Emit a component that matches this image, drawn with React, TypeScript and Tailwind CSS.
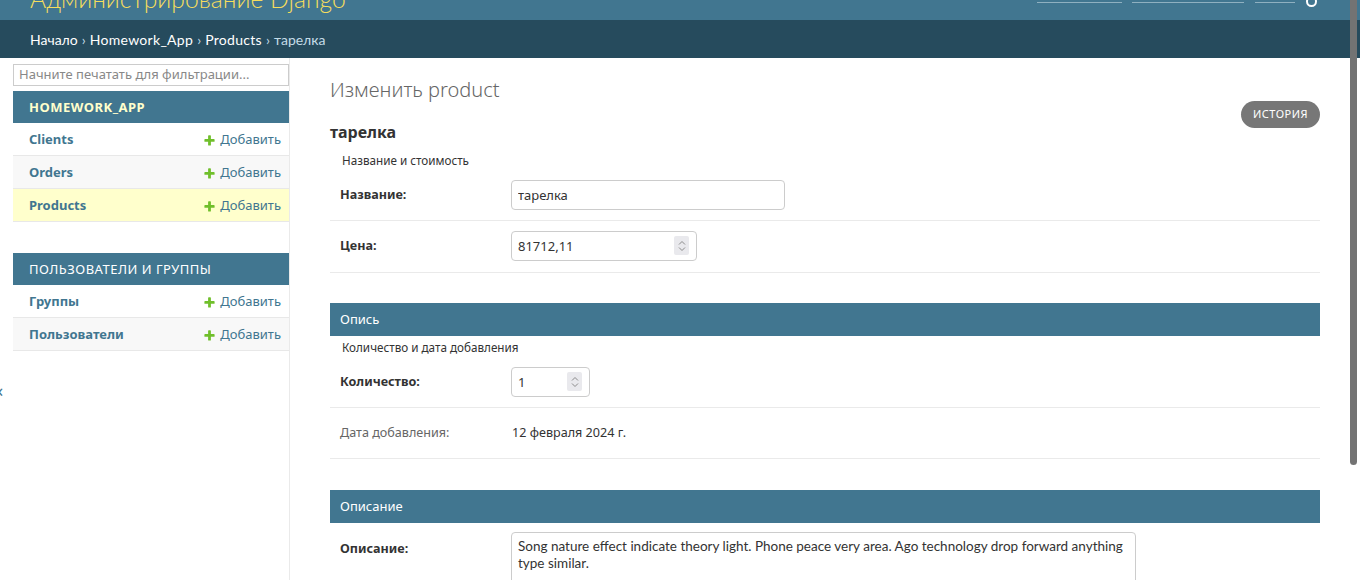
import React from "react";

const body = { fontFamily: '"Noto Sans", "Open Sans", sans-serif' };
const narrow = { fontFamily: 'Lato, "Noto Sans", sans-serif' };

function Plus() {
  return (
    <svg width="13" height="13" viewBox="0 0 1792 1792" className="shrink-0">
      <path
        fill="#70bf2b"
        d="M1600 796v192q0 40-28 68t-68 28h-416v416q0 40-28 68t-68 28h-192q-40 0-68-28t-28-68v-416h-416q-40 0-68-28t-28-68v-192q0-40 28-68t68-28h416v-416q0-40 28-68t68-28h192q40 0 68 28t28 68v416h416q40 0 68 28t28 68z"
      />
    </svg>
  );
}

function Spinner() {
  return (
    <span className="absolute right-[8px] top-[5px] flex h-[19px] w-[15px] flex-col items-center justify-center gap-[2px] rounded-[2px] bg-[#e9e9ed]">
      <svg width="8" height="5" viewBox="0 0 8 5">
        <path d="M1 4.5 L4 1.5 L7 4.5" fill="none" stroke="#8a8a8a" strokeWidth="1" />
      </svg>
      <svg width="8" height="5" viewBox="0 0 8 5">
        <path d="M1 0.5 L4 3.5 L7 0.5" fill="none" stroke="#8a8a8a" strokeWidth="1" />
      </svg>
    </span>
  );
}

function SideRow({ name, bg }: { name: string; bg: string }) {
  return (
    <div className={`flex h-[33px] items-center justify-between border-b border-[#e8e8e8] pl-[16px] pr-[8px] pt-[2px] ${bg}`}>
      <span className="text-[13px] font-bold text-[#417690]">{name}</span>
      <span className="flex items-center gap-[4px] text-[13px] text-[#417690]">
        <Plus />
        Добавить
      </span>
    </div>
  );
}

function Caption({ text, current }: { text: string; current?: boolean }) {
  return (
    <div className="flex h-[32px] items-center bg-[#417690] pl-[16px] pt-[1px]">
      <span
        className={`text-[13px] uppercase tracking-[0.5px] ${current ? "font-bold text-[#ffffcc]" : "font-normal text-white"}`}
      >
        {text}
      </span>
    </div>
  );
}

function Label({ children, bold = true }: { children: React.ReactNode; bold?: boolean }) {
  return (
    <div className={`w-[171px] shrink-0 text-[12.6px] ${bold ? "font-bold text-[#333]" : "text-[#666]"}`}>
      {children}
    </div>
  );
}

function FieldHeader({ text }: { text: string }) {
  return (
    <div className="flex h-[33px] items-center bg-[#417690] px-[10px] text-[13px] text-white">{text}</div>
  );
}

function Desc({ text }: { text: string }) {
  return (
    <div className="flex h-[21px] items-center pl-[12px] pt-[2px] text-[11.7px] text-[#333]">{text}</div>
  );
}

export default function App() {
  return (
    <div className="relative h-[580px] w-[1360px] overflow-hidden bg-white" style={body}>
      {/* header (scrolled) */}
      <div className="h-[20px] overflow-hidden bg-[#417690]">
        <div className="mt-[-26px] flex h-[40px] items-end justify-between pl-[30px] pr-[43px]">
          <div className="text-[24.7px] font-light leading-[30px] text-[#f5dd5d]" style={narrow}>
            Администрирование Django
          </div>
          <div className="mb-[11px] flex items-end text-[11px] text-[#ffc]">
            <span className="w-[85px] border-b border-[#8fb0c0]">&nbsp;</span>
            <span className="ml-[10px] w-[112px] border-b border-[#8fb0c0]">&nbsp;</span>
            <span className="ml-[11px] w-[40px] border-b border-[#8fb0c0]">&nbsp;</span>
            <span className="mb-[-4px] ml-[11px] h-[11px] w-[11px] rounded-full border-[2px] border-white"></span>
          </div>
        </div>
      </div>

      {/* breadcrumbs */}
      <div className="flex h-[38px] items-center px-[30px] text-[14px] text-[#c4dce8] bg-[#264b5d]" style={narrow}>
        <span className="text-white">Начало</span>
        <span className="mx-[4px]">›</span>
        <span className="text-white tracking-[0.3px]">Homework_App</span>
        <span className="mx-[4px]">›</span>
        <span className="text-white tracking-[0.3px]">Products</span>
        <span className="mx-[4px]">›</span>
        <span>тарелка</span>
      </div>

      <div className="flex">
        {/* sidebar */}
        <div className="h-[522px] w-[290px] shrink-0 border-r border-[#eaeaea] pl-[13px] pt-[6px]">
          <div className="flex h-[22px] items-center border border-[#ccc] px-[5px] text-[13px] text-[#888]">
            Начните печатать для фильтрации...
          </div>
          <div className="mt-[5px]">
            <Caption text="Homework_App" current />
            <SideRow name="Clients" bg="bg-white" />
            <SideRow name="Orders" bg="bg-[#f8f8f8]" />
            <SideRow name="Products" bg="bg-[#ffffcc]" />
          </div>
          <div className="mt-[31px]">
            <Caption text="Пользователи и группы" />
            <SideRow name="Группы" bg="bg-white" />
            <SideRow name="Пользователи" bg="bg-[#f8f8f8]" />
          </div>
        </div>

        {/* content */}
        <div className="flex-1 pl-[40px] pr-[40px] pt-[20px]">
          <h1 className="h-[24px] text-[20px] font-light leading-[24px] text-[#666]">Изменить product</h1>
          <div className="mt-[-1px] flex items-start justify-between">
            <h2 className="mt-[21px] text-[16px] font-bold leading-[20px] text-[#333]">тарелка</h2>
            <span className="flex h-[27px] items-center rounded-full bg-[#777] px-[12px] text-[11px] uppercase tracking-[0.5px] text-white">
              История
            </span>
          </div>

          <div className="mt-[7px]">
            <Desc text="Название и стоимость" />
            <div className="flex items-center border-b border-[#eaeaea] px-[10px] py-[10px]">
              <Label>Название:</Label>
              <input
                readOnly
                value="тарелка"
                className="h-[30px] w-[274px] rounded-[4px] border border-[#ccc] px-[6px] text-[13px] text-[#333] outline-none"
                style={body}
              />
            </div>
            <div className="flex items-center border-b border-[#eaeaea] px-[10px] pb-[11px] pt-[10px]">
              <Label>Цена:</Label>
              <div className="relative">
                <input
                  readOnly
                  value="81712,11"
                  className="h-[30px] w-[186px] rounded-[4px] border border-[#ccc] px-[6px] text-[13px] text-[#333] outline-none"
                  style={body}
                />
                <Spinner />
              </div>
            </div>
          </div>

          <div className="mt-[30px]">
            <FieldHeader text="Опись" />
            <Desc text="Количество и дата добавления" />
            <div className="flex items-center border-b border-[#eaeaea] px-[10px] py-[10px]">
              <Label>Количество:</Label>
              <div className="relative">
                <input
                  readOnly
                  value="1"
                  className="h-[30px] w-[79px] rounded-[4px] border border-[#ccc] px-[6px] text-[13px] text-[#333] outline-none"
                  style={body}
                />
                <Spinner />
              </div>
            </div>
            <div className="flex h-[51px] items-center border-b border-[#eaeaea] px-[10px]">
              <Label bold={false}>Дата добавления:</Label>
              <span className="pl-[1px] text-[12.6px] text-[#333]">12 февраля 2024 г.</span>
            </div>
          </div>

          <div className="mt-[31px]">
            <FieldHeader text="Описание" />
            <div className="flex items-start px-[10px] pt-[9px]">
              <Label>
                <div className="pt-[8px]">Описание:</div>
              </Label>
              <div
                className="h-[60px] w-[625px] rounded-[4px] border border-[#ccc] px-[6px] pt-[5px] text-[13.5px] leading-[17px] text-[#333]"
                style={narrow}
              >
                Song nature effect indicate theory light. Phone peace very area. Ago technology drop forward anything type similar.
              </div>
            </div>
          </div>
        </div>
      </div>

      {/* sidebar toggle */}
      <div className="absolute left-[-6px] top-[380px] text-[18px] leading-[20px] text-[#417690]">«</div>

      {/* overlay scrollbar */}
      <div className="absolute right-[3px] top-0 h-[465px] w-[7px] rounded-b-[4px] bg-[#737373]"></div>
    </div>
  );
}
